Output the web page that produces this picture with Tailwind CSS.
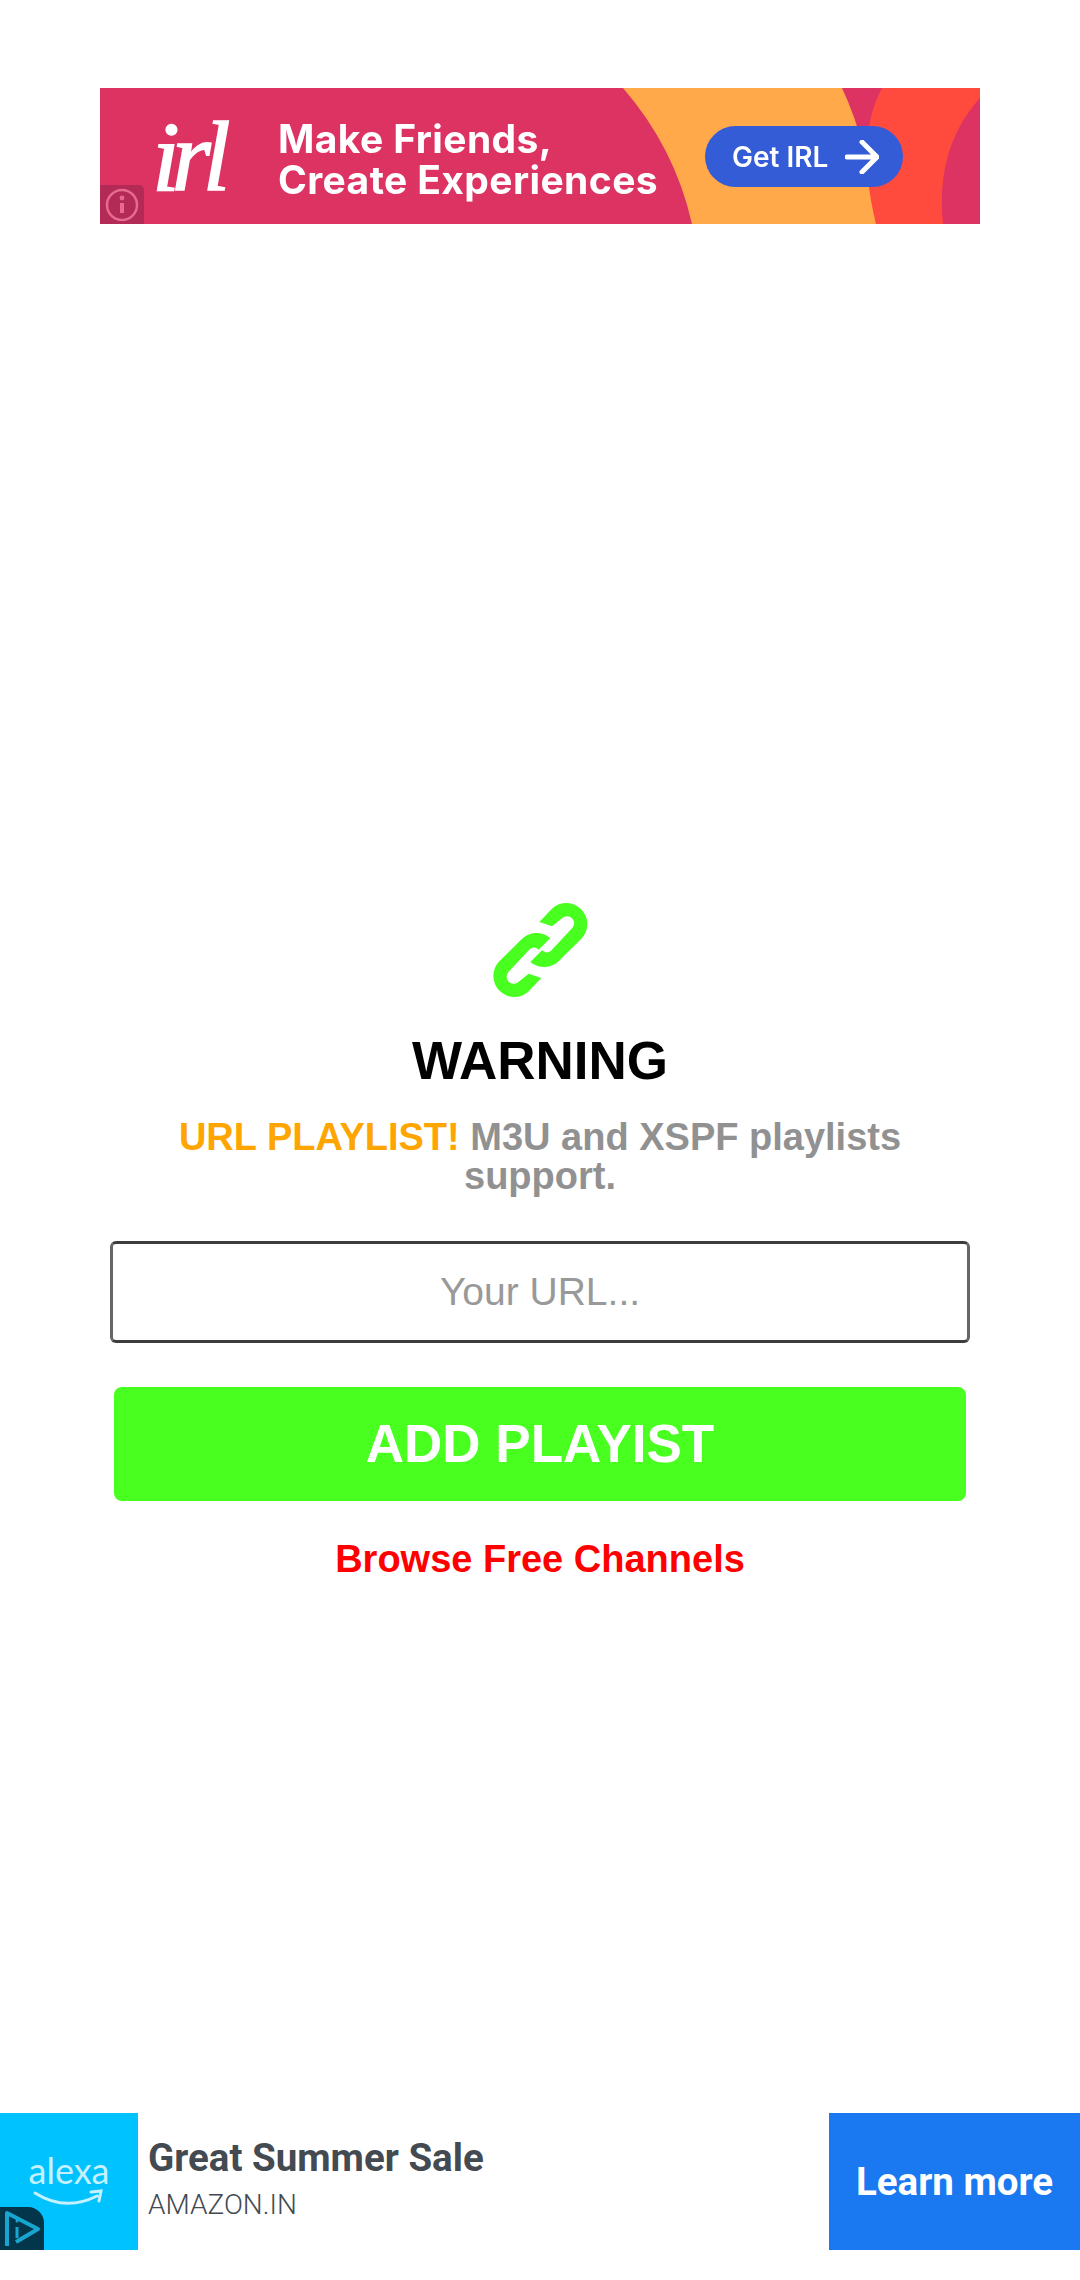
<!DOCTYPE html>
<html lang="en">
<head>
    <meta charset="UTF-8">
    <meta name="viewport" content="width=device-width, initial-scale=1.0">
    <title>Add Playlist</title>
    <script src="https://cdn.jsdelivr.net/npm/@tailwindcss/browser@4"></script>
</head>
<body class="bg-white h-[2280px] overflow-hidden flex flex-col items-center font-['Liberation_Sans',Arial,sans-serif]">

    <!-- Top banner ad -->
    <div class="relative mt-[88px] w-[880px] h-[136px] shrink-0 overflow-hidden bg-[#dd3363]">
        <svg class="absolute inset-0" width="880" height="136" viewBox="0 0 880 136">
            <path d="M523 0 Q575 60 592 136 L776 136 Q770 60 742 0 Z" fill="#ffa94a"/>
            <path d="M782 0 Q755 50 776 136 L843 136 Q835 60 880 10 L880 0 Z" fill="#ff4b3e"/>
        </svg>
        <div class="relative flex h-full items-center blur-[0.7px] text-white">
            <span class="ml-[52px] w-[126px] pt-[2px] text-[100px] leading-none tracking-[-8px] italic font-['Liberation_Serif',serif] [-webkit-text-stroke:1.5px_#fff]">irl</span>
            <div class="pt-[5px] text-[39px] leading-[41px] font-bold tracking-[0.4px] font-['Inter',sans-serif]">
                <div>Make Friends,</div>
                <div>Create Experiences</div>
            </div>
        </div>
        <div class="absolute left-[605px] top-[38px] w-[198px] h-[61px] rounded-full bg-[#335cd6] flex items-center pl-[27px] gap-[17px] text-white blur-[0.5px]">
            <span class="text-[28px] font-semibold font-['Inter',sans-serif]">Get IRL</span>
            <svg width="34" height="34" viewBox="0 0 34 34" fill="none" stroke="#fff" stroke-width="5" stroke-linecap="round" stroke-linejoin="round"><path d="M2 17 H31 M17 2 L32 17 L17 32"/></svg>
        </div>
        <div class="absolute left-0 bottom-0 w-[44px] h-[39px] rounded-tr-[5px] bg-[#b22a55] flex items-center justify-center">
            <svg width="34" height="34" viewBox="0 0 34 34" fill="none">
                <circle cx="17" cy="17" r="15" stroke="#e86a90" stroke-width="2.5"/>
                <circle cx="17" cy="10" r="2.4" fill="#e86a90"/>
                <path d="M17 15 V25" stroke="#e86a90" stroke-width="4"/>
            </svg>
        </div>
    </div>

    <!-- Link icon -->
    <svg class="mt-[678px] shrink-0" width="95" height="96" viewBox="68 65 285 288" fill="#48ff20">
        <path d="M207 125 L245.5 84.5 A63 63 0 0 1 334.5 173.5 L269.5 238.5 A64 64 0 0 1 180 245 L215 210 Q228 222 242 211 L305 144 A21 21 0 0 0 275 114 L245 138 Z"/>
        <path d="M207 125 L245.5 84.5 A63 63 0 0 1 334.5 173.5 L269.5 238.5 A64 64 0 0 1 180 245 L215 210 Q228 222 242 211 L305 144 A21 21 0 0 0 275 114 L245 138 Z" transform="rotate(180 210 209)"/>
    </svg>

    <h1 class="mt-[36px] text-[53px] leading-[53px] font-bold text-black">WARNING</h1>
    <p class="mt-[31px] w-[780px] text-center text-[38px] leading-[39px] font-bold text-[#919191]">
        <span class="text-[#ffa500]">URL PLAYLIST!</span> M3U and XSPF playlists support.
    </p>

    <input type="text" placeholder="Your URL..." class="mt-[45px] w-[860px] h-[102px] shrink-0 rounded-[6px] border-[3px] border-y-[#3d3d3d] border-x-[#666666] bg-white text-center text-[39px] outline-none placeholder:text-[#999999]">

    <button class="mt-[44px] w-[852px] h-[114px] shrink-0 rounded-[8px] bg-[#48ff20] text-white text-[53px] font-bold">ADD PLAYIST</button>

    <a class="mt-[39px] text-[38px] leading-[38px] font-bold text-[#ff0000]">Browse Free Channels</a>

    <!-- Bottom ad -->
    <div class="mt-[535px] w-full h-[137px] shrink-0 flex font-['Roboto',sans-serif]">
        <div class="relative w-[138px] h-full bg-[#00c2ff] flex flex-col items-center pt-[38px]">
            <span class="text-[36px] leading-[38px] text-[#c4f1ff] font-['Lato',sans-serif]">alexa</span>
            <svg class="mt-[-1px]" width="72" height="26" viewBox="0 0 72 26" fill="none" stroke="#c4f1ff" stroke-width="3" stroke-linecap="round"><path d="M2 5 Q32 24 64 8 M58 4 L68 3 L66 13"/></svg>
            <div class="absolute left-0 bottom-0 w-[44px] h-[43px] rounded-tr-[16px] bg-[#03364a]">
                <svg width="44" height="43" viewBox="0 0 44 43" fill="none" stroke="#17a6cf" stroke-width="4" stroke-linejoin="round">
                    <path d="M7 39 V6 L38 22 L16 35"/>
                    <path d="M17 20 V31" stroke-width="3"/>
                    <circle cx="17" cy="14" r="1.5" fill="#17a6cf" stroke="none"/>
                </svg>
            </div>
        </div>
        <div class="flex-1 pl-[10px] pt-[22px]">
            <div class="text-[38.5px] leading-[46px] font-bold text-[#434a52]">Great Summer Sale</div>
            <div class="mt-[8px] text-[28px] leading-[32px] font-light text-[#434a52]">AMAZON.IN</div>
        </div>
        <div class="w-[251px] h-full bg-[#1a78f0] flex items-center justify-center text-white text-[38.5px] font-bold">Learn more</div>
    </div>
</body>
</html>
